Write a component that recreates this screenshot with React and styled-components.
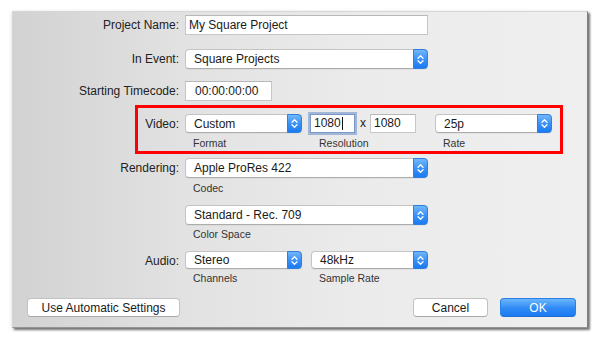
import React from "react";
import styled, { createGlobalStyle } from "styled-components";

const GlobalStyle = createGlobalStyle`
    * { box-sizing: border-box; }
    body {
        margin: 0;
        background: #ffffff;
        font-family: "Liberation Sans", Arial, sans-serif;
        color: #222;
    }
`

const Page = styled.div`
    width: 600px;
    height: 339px;
    padding: 11px 12px 0 12px;
`

const Dialog = styled.div`
    width: 576px;
    height: 317px;
    border: 1px solid #d6d6d6;
    border-right-color: #7e7e7e;
    border-bottom-color: #949494;
    background: linear-gradient(90deg, #d2d2d2 0%, #e2e2e2 30%, #ebebeb 60%, #efefef 100%);
    box-shadow: 2px 2px 2px rgba(0, 0, 0, 0.5), 0 1px 4px rgba(0, 0, 0, 0.15);
    padding-top: 3px;
    display: flex;
    flex-direction: column;
`

const Row = styled.div`
    display: flex;
    align-items: flex-start;
    gap: ${(p) => p.$gap ?? 6}px;
    margin-top: ${(p) => p.$mt || 0}px;
`

const Label = styled.div`
    width: ${(p) => p.$w || 166}px;
    text-align: right;
    font-size: 12px;
    line-height: 20px;
    white-space: nowrap;
`

const Highlight = styled.div`
    margin-top: 4px;
    margin-left: 122px;
    width: 428px;
    height: 49px;
    border: 3px solid #ff0000;
    padding-top: 6px;
`

const Field = styled.div`
    display: flex;
    flex-direction: column;
`

const SubLabel = styled.div`
    font-size: 10.5px;
    line-height: 14px;
    margin-top: ${(p) => p.$mt ?? 2}px;
    padding-left: ${(p) => p.$pl || 8}px;
    color: #333;
`

const TextBox = styled.div`
    width: ${(p) => p.$w}px;
    height: ${(p) => p.$h || 20}px;
    background: #fff;
    border: 1px solid #c6c6c6;
    border-top-color: #b8b8b8;
    padding-left: ${(p) => p.$pl || 3}px;
    font-size: 12px;
    line-height: ${(p) => (p.$h || 20) - 2}px;
    display: flex;
    align-items: center;
    color: #1a1a1a;
    ${(p) =>
        p.$focus &&
        `
        border-color: #7b97c6;
        box-shadow: 0 0 0 2px #a2b6d8;
    `}
`

const Caret = styled.span`
    display: inline-block;
    width: 1px;
    height: 13px;
    background: #111;
    margin-left: 1px;
`

const Times = styled.div`
    font-size: 12px;
    line-height: 19px;
    padding: 0 4px 0 5px;
`

const PopUp = styled.div`
    width: ${(p) => p.$w}px;
    height: ${(p) => p.$h || 20}px;
    background: #fff;
    border: 1px solid #c4c4c4;
    border-bottom-color: #acacac;
    border-radius: 4px;
    display: flex;
    align-items: stretch;
    box-shadow: 0 1px 0 rgba(0, 0, 0, 0.04);
`

const PopUpText = styled.div`
    flex: 1;
    padding-left: 8px;
    font-size: 12px;
    display: flex;
    align-items: center;
    color: #1a1a1a;
`

const Stepper = styled.div`
    width: 15px;
    margin: -1px -1px -1px 0;
    border-radius: 0 4px 4px 0;
    background: linear-gradient(180deg, #72b7fb 0%, #3b92f7 50%, #1c7bf2 100%);
    border: 1px solid #2f7fe0;
    display: flex;
    align-items: center;
    justify-content: center;
`

const ButtonRow = styled.div`
    display: flex;
    align-items: center;
    margin-top: 13px;
    padding: 0 11px 0 14px;
`

const Button = styled.div`
    width: ${(p) => p.$w}px;
    height: 19px;
    margin-left: ${(p) => p.$ml || 0}px;
    border-radius: 4px;
    font-size: 12px;
    display: flex;
    align-items: center;
    justify-content: center;
    background: ${(p) => (p.$primary ? "linear-gradient(180deg, #6ab6fb 0%, #2f8af6 55%, #1b7af2 100%)" : "#fff")};
    color: ${(p) => (p.$primary ? "#fff" : "#1a1a1a")};
    border: 1px solid ${(p) => (p.$primary ? "#2b7fe6" : "#c2c2c2")};
    border-bottom-color: ${(p) => (p.$primary ? "#1d6fd6" : "#a9a9a9")};
`

const Spacer = styled.div`
    flex: 1;
`

const Arrows = () => (
    <svg width="9" height="13" viewBox="0 0 9 13">
        <path d="M2 5.2 L4.5 2.7 L7 5.2" fill="none" stroke="#fff" strokeWidth="1.3" strokeLinecap="round" strokeLinejoin="round" />
        <path d="M2 7.8 L4.5 10.3 L7 7.8" fill="none" stroke="#fff" strokeWidth="1.3" strokeLinecap="round" strokeLinejoin="round" />
    </svg>
)

const Select = ({ w, h, children }) => (
    <PopUp $w={w} $h={h}>
        <PopUpText>{children}</PopUpText>
        <Stepper>
            <Arrows />
        </Stepper>
    </PopUp>
)

const App = () => {
    return (
        <Page>
            <GlobalStyle />
            <Dialog>
                <Row>
                    <Label>Project Name:</Label>
                    <TextBox $w={243}>My Square Project</TextBox>
                </Row>
                <Row $mt={14}>
                    <Label>In Event:</Label>
                    <Select w={243}>Square Projects</Select>
                </Row>
                <Row $mt={12}>
                    <Label>Starting Timecode:</Label>
                    <TextBox $w={87} $pl={9}>00:00:00:00</TextBox>
                </Row>

                <Highlight>
                    <Row $gap={0}>
                        <Label $w={41}>Video:</Label>
                        <Field style={{ marginLeft: 6 }}>
                            <Select w={117} h={19}>Custom</Select>
                            <SubLabel $mt={3}>Format</SubLabel>
                        </Field>
                        <Field style={{ marginLeft: 8 }}>
                            <Row $gap={0}>
                                <TextBox $w={45} $h={19} $focus>
                                    1080<Caret />
                                </TextBox>
                                <Times>x</Times>
                                <TextBox $w={46} $h={19}>1080</TextBox>
                            </Row>
                            <SubLabel $mt={3} $pl={9}>Resolution</SubLabel>
                        </Field>
                        <Field style={{ marginLeft: 19 }}>
                            <Select w={117} h={19}>25p</Select>
                            <SubLabel $mt={3}>Rate</SubLabel>
                        </Field>
                    </Row>
                </Highlight>

                <Row $mt={4}>
                    <Label>Rendering:</Label>
                    <Field>
                        <Select w={243}>Apple ProRes 422</Select>
                        <SubLabel $mt={3}>Codec</SubLabel>
                    </Field>
                </Row>
                <Row $mt={10}>
                    <Label />
                    <Field>
                        <Select w={243}>Standard - Rec. 709</Select>
                        <SubLabel>Color Space</SubLabel>
                    </Field>
                </Row>
                <Row $mt={10}>
                    <Label>Audio:</Label>
                    <Field>
                        <Select w={117} h={18}>Stereo</Select>
                        <SubLabel>Channels</SubLabel>
                    </Field>
                    <Field style={{ marginLeft: 3 }}>
                        <Select w={117} h={18}>48kHz</Select>
                        <SubLabel>Sample Rate</SubLabel>
                    </Field>
                </Row>

                <ButtonRow>
                    <Button $w={153}>Use Automatic Settings</Button>
                    <Spacer />
                    <Button $w={75}>Cancel</Button>
                    <Button $w={76} $ml={12} $primary>OK</Button>
                </ButtonRow>
            </Dialog>
        </Page>
    );
};

export default App;
